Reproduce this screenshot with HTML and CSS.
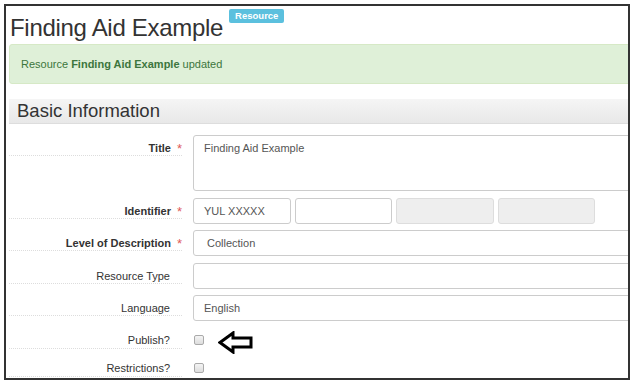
FILE: index.html
```html
<!DOCTYPE html>
<html lang="en">
<head>
    <meta charset="UTF-8">
    <title>Finding Aid Example</title>
    <link rel="stylesheet" href="styles.css">
</head>
<body>
    <div class="frame">
        <div class="page">
            <div class="record-title">
                <h1>Finding Aid Example</h1>
                <span class="badge">Resource</span>
            </div>

            <div class="alert">Resource <strong>Finding Aid Example</strong> updated</div>

            <h2 class="section-title">Basic Information</h2>

            <div class="form">
                <div class="row">
                    <label class="label required">Title</label>
                    <div class="field"><div class="input textarea">Finding Aid Example</div></div>
                </div>
                <div class="row">
                    <label class="label required">Identifier</label>
                    <div class="field id-parts">
                        <div class="input small">YUL XXXXX</div>
                        <div class="input small"></div>
                        <div class="input small disabled"></div>
                        <div class="input small disabled"></div>
                    </div>
                </div>
                <div class="row">
                    <label class="label required">Level of Description</label>
                    <div class="field"><div class="input select">Collection</div></div>
                </div>
                <div class="row">
                    <label class="label plain">Resource Type</label>
                    <div class="field"><div class="input"></div></div>
                </div>
                <div class="row">
                    <label class="label plain">Language</label>
                    <div class="field"><div class="input">English</div></div>
                </div>
                <div class="row check-row">
                    <label class="label plain">Publish?</label>
                    <div class="field">
                        <span class="checkbox"></span>
                        <svg class="arrow" width="36" height="23" viewBox="0 0 36 23">
                            <path d="M2 11.5 L15 2 L15 7 L33 7 L33 16 L15 16 L15 21 Z" fill="#fff" stroke="#000" stroke-width="3" stroke-linejoin="miter"/>
                        </svg>
                    </div>
                </div>
                <div class="row check-row">
                    <label class="label plain">Restrictions?</label>
                    <div class="field"><span class="checkbox"></span></div>
                </div>
            </div>
        </div>
    </div>
</body>
</html>
```

FILE: styles.css
```css
:root {
    --text: #333333;
    --muted: #555555;
    --border: #cccccc;
    --required: #e05a5a;
}

body {
    margin: 0;
    background: #ffffff;
    font-family: "Liberation Sans", Arial, sans-serif;
    color: var(--text);
}

.frame {
    margin: 4px 0 0 4px;
    width: 622px;
    height: 372px;
    border: 2px solid #333333;
    overflow: hidden;
}

.page {
    padding: 0 0 0 3px;
    width: 700px;
}

.record-title {
    display: flex;
    align-items: flex-start;
    height: 38px;
}

.record-title h1 {
    margin: 7px 0 0 1px;
    font-size: 24px;
    letter-spacing: -0.3px;
    font-weight: normal;
    line-height: 30px;
    color: #333333;
}

.badge {
    margin: 3px 0 0 6px;
    padding: 0 6px;
    height: 14px;
    line-height: 14px;
    font-size: 9.5px;
    font-weight: bold;
    color: #ffffff;
    background: #5bc0de;
    border-radius: 2px;
}

.alert {
    height: 38px;
    line-height: 38px;
    padding-left: 11px;
    font-size: 11px;
    color: #3c763d;
    background: #dff0d8;
    border: 1px solid #d6e9c6;
    border-radius: 3px 0 0 3px;
}

.section-title {
    margin: 15px 0 0;
    height: 24px;
    padding-left: 8px;
    font-size: 18.5px;
    font-weight: normal;
    line-height: 24px;
    color: #333333;
    background: linear-gradient(#f5f5f5, #e8e8e8);
    border-bottom: 1px solid #dddddd;
}

.form {
    padding-top: 11px;
}

.row {
    display: flex;
    margin-bottom: 6.5px;
}

.label {
    width: 173px;
    padding-top: 6px;
    box-sizing: border-box;
    height: 21px;
    font-size: 11px;
    line-height: 14px;
    text-align: right;
    border-bottom: 1px dotted #dddddd;
    flex-shrink: 0;
}

.label.required {
    font-weight: bold;
}

.label.required::after {
    content: "*";
    display: inline-block;
    width: 11px;
    text-align: right;
    color: var(--required);
    font-size: 13px;
    font-weight: normal;
    vertical-align: -1px;
}

.label.plain {
    padding-right: 12px;
}

.field {
    margin-left: 11px;
    flex: 1;
    display: flex;
    align-items: flex-start;
}

.input {
    box-sizing: border-box;
    flex: 1;
    height: 26px;
    padding: 0 10px;
    font-size: 11px;
    line-height: 24px;
    color: var(--muted);
    border: 1px solid var(--border);
    border-radius: 3px;
    background: #ffffff;
}

.input.textarea {
    height: 56px;
    padding-top: 5px;
    line-height: 14px;
}

.input.select {
    padding-left: 13px;
}

.id-parts {
    gap: 4px;
}

.input.small {
    flex: none;
    width: 97.5px;
}

.input.disabled {
    background: #eeeeee;
    border-color: #dddddd;
}

.check-row {
    margin-bottom: 7px;
}

.check-row .label {
    padding-top: 5px;
}

.check-row .field {
    height: 21px;
}

.checkbox {
    margin: 7px 0 0 1px;
    width: 10px;
    height: 10px;
    box-sizing: border-box;
    border: 1px solid #aaaaaa;
    border-radius: 2px;
    background: linear-gradient(#f4f4f4, #dddddd);
}

.arrow {
    margin: 3px 0 0 14px;
}
```
